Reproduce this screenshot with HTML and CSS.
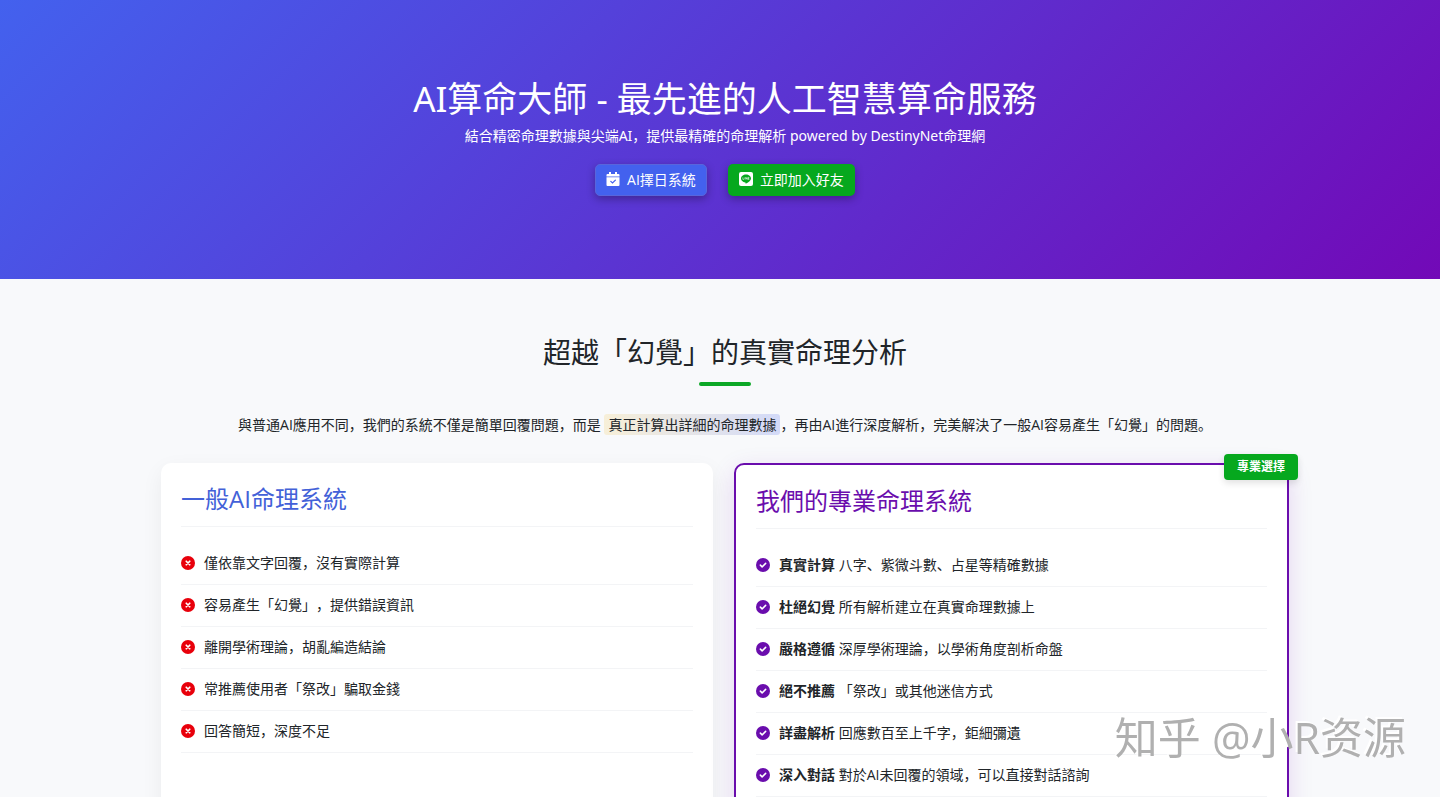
FILE: index.html
```html
<!DOCTYPE html>
<html lang="zh-CN">
<head>
<meta charset="utf-8">
<meta name="viewport" content="width=device-width, initial-scale=1">
<title>AI算命大師</title>
<link rel="stylesheet" href="styles.css">
</head>
<body>
<svg class="sprite" aria-hidden="true">
  <symbol id="cross" viewBox="0 0 512 512"><circle cx="256" cy="256" r="256" fill="currentColor"/><path d="M192 192l128 128M320 192L192 320" stroke="#fff" stroke-width="62" stroke-linecap="round"/></symbol>
  <symbol id="check" viewBox="0 0 512 512"><circle cx="256" cy="256" r="256" fill="currentColor"/><path d="M160 262l64 64 128-128" fill="none" stroke="#fff" stroke-width="56" stroke-linecap="round" stroke-linejoin="round"/></symbol>
</svg>
<header class="hero">
  <h1 class="hero-title">AI算命大師 - 最先進的人工智慧算命服務</h1>
  <p class="hero-text">結合精密命理數據與尖端AI，提供最精確的命理解析 powered by DestinyNet命理網</p>
  <div class="actions">
    <a class="btn btn-blue" href="#date"><svg class="btn-icon" viewBox="0 0 14 14" aria-hidden="true"><path d="M3 0h2v2h4V0h2v2h1.500a1 1 0 0 1 1 1v1.500H.5V3a1 1 0 0 1 1-1H3zM.5 5.200h13V13a1 1 0 0 1-1 1h-11a1 1 0 0 1-1-1z" fill="#fff"/><path d="M4.800 9.400l1.700 1.600 2.900-2.900" fill="none" stroke="#4361ee" stroke-width="1.200" stroke-linecap="round"/></svg>AI擇日系統</a>
    <a class="btn btn-green" href="#line"><svg class="btn-icon" viewBox="0 0 14 14" aria-hidden="true"><rect width="14" height="14" rx="2" fill="#fff"/><path d="M7 2.500c-2.800 0-5 1.800-5 4 0 2 1.800 3.600 4.200 3.900.6.100.5.500.4 1.400 2.700-1.300 5.400-3 5.400-5.300 0-2.200-2.200-4-5-4z" fill="#06a81e"/><path d="M3.900 5.400v2h1M5.900 5.400v2M6.900 7.400v-2l1.300 2v-2M10.300 5.400H9.200v2h1.100M9.200 6.400h1" fill="none" stroke="#fff" stroke-width=".6"/></svg>立即加入好友</a>
  </div>
</header>
<main class="section">
  <h2 class="section-title">超越「幻覺」的真實命理分析</h2>
  <p class="lead">與普通AI應用不同，我們的系統不僅是簡單回覆問題，而是 <span class="highlight">真正計算出詳細的命理數據</span>，再由AI進行深度解析，完美解決了一般AI容易產生「幻覺」的問題。</p>
  <div class="cards">
    <section class="card">
      <h3 class="card-title">一般AI命理系統</h3>
      <ul class="list list-bad">
        <li class="item"><svg class="icon"><use href="#cross"/></svg><span>僅依靠文字回覆，沒有實際計算</span></li>
        <li class="item"><svg class="icon"><use href="#cross"/></svg><span>容易產生「幻覺」，提供錯誤資訊</span></li>
        <li class="item"><svg class="icon"><use href="#cross"/></svg><span>離開學術理論，胡亂編造結論</span></li>
        <li class="item"><svg class="icon"><use href="#cross"/></svg><span>常推薦使用者「祭改」騙取金錢</span></li>
        <li class="item"><svg class="icon"><use href="#cross"/></svg><span>回答簡短，深度不足</span></li>
      </ul>
    </section>
    <section class="card card-pro">
      <span class="badge">專業選擇</span>
      <h3 class="card-title">我們的專業命理系統</h3>
      <ul class="list list-good">
        <li class="item"><svg class="icon"><use href="#check"/></svg><span><strong>真實計算</strong> 八字、紫微斗數、占星等精確數據</span></li>
        <li class="item"><svg class="icon"><use href="#check"/></svg><span><strong>杜絕幻覺</strong> 所有解析建立在真實命理數據上</span></li>
        <li class="item"><svg class="icon"><use href="#check"/></svg><span><strong>嚴格遵循</strong> 深厚學術理論，以學術角度剖析命盤</span></li>
        <li class="item"><svg class="icon"><use href="#check"/></svg><span><strong>絕不推薦</strong> 「祭改」或其他迷信方式</span></li>
        <li class="item"><svg class="icon"><use href="#check"/></svg><span><strong>詳盡解析</strong> 回應數百至上千字，鉅細彌遺</span></li>
        <li class="item"><svg class="icon"><use href="#check"/></svg><span><strong>深入對話</strong> 對於AI未回覆的領域，可以直接對話諮詢</span></li>
      </ul>
    </section>
  </div>
</main>
<div class="watermark">知乎 @小R资源</div>
</body>
</html>
```
FILE: styles.css
```css
* { box-sizing: border-box; }
body {
  margin: 0;
  background: #f8f9fb;
  color: #212529;
  font: 14px/21px "Open Sans", "Noto Sans CJK SC", sans-serif;
  text-spacing-trim: space-all;
}
h1, h2, h3, p, ul { margin: 0; padding: 0; font-weight: 400; }
.sprite { display: none; }
.hero {
  display: flex;
  flex-direction: column;
  align-items: center;
  padding: 78px 0 83px 10px;
  background: linear-gradient(135deg, #4361ee 0%, #7209b7 100%);
  color: #fff;
  font-family: "Noto Sans", "Noto Sans CJK SC", sans-serif;
  text-align: center;
}
.hero-title { font-size: 35px; line-height: 42px; }
.hero-text { margin-top: 5px; }
.actions { display: flex; gap: 21px; margin-top: 18px; }
.btn {
  display: flex;
  align-items: center;
  gap: 7px;
  height: 32px;
  padding: 0 11px 2px;
  border-radius: 5px;
  color: #fff;
  font-family: "Open Sans", "Noto Sans CJK SC", sans-serif;
  text-decoration: none;
  box-shadow: 0 3px 8px rgba(0, 0, 0, .3);
}
.btn-blue { background: #4361ee; border: 1px solid #5865dc; padding: 0 10px 2px; }
.btn-green { background: #06a81e; }
.btn-icon { width: 14px; height: 14px; }
.section { padding: 56px 151px 52px 161px; }
.section-title {
  font-size: 28px;
  line-height: 34px;
  text-align: center;
}
.section-title::after {
  content: "";
  display: block;
  width: 52px;
  height: 4px;
  margin: 13px auto 0;
  border-radius: 2px;
  background: #0ca826;
}
.lead { margin: 28px 0; text-align: center; }
.highlight {
  padding: 1px 4px;
  border-radius: 3px;
  background: linear-gradient(90deg, #f7efd8, #d3daf8);
}
.cards {
  display: grid;
  grid-template-columns: 552fr 555fr;
  gap: 21px;
}
.card {
  position: relative;
  padding: 21px 20px;
  border-radius: 10px;
  background: #fff;
  box-shadow: 0 7px 21px rgba(0, 0, 0, .06);
}
.card-pro {
  border: 2px solid #6a0dad;
  box-shadow: 0 7px 24px rgba(114, 9, 183, .15);
}
.card-title {
  padding-bottom: 12px;
  border-bottom: 1px solid #f3f4f6;
  color: #4361d8;
  font-size: 24px;
  line-height: 30px;
}
.card-pro .card-title { color: #6a0dad; }
.list { margin-top: 16px; list-style: none; }
.item {
  display: flex;
  align-items: center;
  gap: 9px;
  padding: 9px 0 11px;
  border-bottom: 1px solid #f3f4f6;
}
.icon { width: 14px; height: 14px; }
.list-bad { color: #e8000b; }
.list-good { color: #6a0dad; }
.item span { color: #212529; }
strong { font-weight: 700; }
.badge {
  position: absolute;
  top: -11px;
  right: -11px;
  padding: 3px 13px;
  border-radius: 4px;
  background: #06a81e;
  color: #fff;
  font-size: 12px;
  font-weight: 700;
  line-height: 20px;
  box-shadow: 0 3px 7px rgba(0, 0, 0, .12);
}
.watermark {
  position: fixed;
  right: 34px;
  bottom: 32px;
  color: #b0b0b0;
  font-size: 43px;
  line-height: 54px;
  text-shadow: -2px -2px 0 #fff;
}
```
